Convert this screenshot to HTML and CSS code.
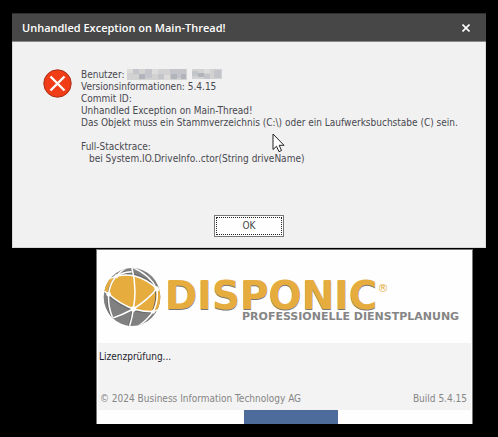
FILE: index.html
```html
<!DOCTYPE html>
<html lang="de">
<head>
<meta charset="utf-8">
<title>Unhandled Exception on Main-Thread!</title>
<link rel="stylesheet" href="styles.css">
</head>
<body>
<main class="desktop">
  <section class="dialog" role="dialog" aria-labelledby="dialog-title">
    <header class="titlebar">
      <h1 class="title" id="dialog-title">Unhandled Exception on Main-Thread!</h1>
      <button class="close" type="button" aria-label="Schließen">
        <svg width="8" height="8" viewBox="0 0 8 8"><path d="M.5 .5L7.5 7.5M7.5 .5L.5 7.5" stroke="#fff" stroke-width="1.6"/></svg>
      </button>
    </header>
    <div class="content">
      <svg class="error-icon" width="30" height="30" viewBox="0 0 30 30">
        <circle cx="14.5" cy="14.5" r="13.7" fill="#f03c17" stroke="#a8301c" stroke-width="1"/>
        <path d="M7.5 7.5L21.5 21.5M21.5 7.5L7.5 21.5" stroke="#fff" stroke-width="2.4"/>
      </svg>
      <div class="message">
        <p class="user">Benutzer:
          <svg class="redacted" width="95" height="12" viewBox="0 0 95 12" shape-rendering="crispEdges">
            <path fill="#d3d2d3" d="M0 0h60v11H0zM65 0h30v10H65z"/>
            <path fill="#c4c5ca" d="M6 0h6v5H6zM18 0h7v9h-7zM31 5h6v5h-6zM43 0h16v9H43zM65 2h6v5h-6zM77 5h6v5h-6zM87 1h7v8h-7z"/>
            <path fill="#b2b4bb" d="M12 5h6v5h-6zM44 5h6v5h-6zM54 5h5v5h-5zM71 4h6v4h-6z"/>
            <path fill="#dedcda" d="M0 0h6v4H0zM25 0h6v5h-6zM37 6h6v5h-6zM77 0h6v4h-6z"/>
          </svg>
        </p>
        <p>Versionsinformationen: 5.4.15</p>
        <p>Commit ID:</p>
        <p>Unhandled Exception on Main-Thread!</p>
        <p>Das Objekt muss ein Stammverzeichnis (C:\) oder ein Laufwerksbuchstabe (C) sein.</p>
        <p class="trace">Full-Stacktrace:</p>
        <p class="frame">bei System.IO.DriveInfo..ctor(String driveName)</p>
      </div>
    </div>
    <footer class="actions"><button class="ok" type="button">OK</button></footer>
    <svg class="pointer" width="13" height="20" viewBox="0 0 13 20"><path d="M1 1V16.5L4.5 13.3L7 18.7L9.5 17.5L7.2 12.3H12Z" fill="#fff" stroke="#222" stroke-width="1"/></svg>
  </section>

  <section class="splash">
    <div class="brand">
      <svg class="globe" width="58" height="60" viewBox="40 66 174 180">
        <defs><clipPath id="ball"><ellipse cx="127" cy="156" rx="85" ry="87"/></clipPath></defs>
        <g clip-path="url(#ball)">
          <path fill="#808080" d="M40 66h174v180H40z"/>
          <path fill="#e6ad3e" d="M40 138L48 108Q64 97 80 94Q108 86 135 93Q172 103 201 131L216 136V192L190 200Q160 200 131 192Q88 175 57 147L40 138Z"/>
          <g fill="none" stroke="#666" stroke-width="3" transform="translate(-4 3)">
            <path d="M201 131Q177 162 131 192Q96 211 66 221M80 94Q60 118 57 147Q54 180 68 214M131 192Q128 220 118 246M201 131Q206 166 190 200"/>
          </g>
          <path fill="none" stroke="#666" stroke-width="3" d="M80 90Q108 82 135 88Q174 98 204 127M57 153Q90 182 131 197Q160 204 190 204"/>
          <g fill="none" stroke="#fff" stroke-width="4.5">
            <path d="M46 110Q64 97 80 94Q108 86 135 93Q172 103 201 131L216 140"/>
            <path d="M126 66Q143 126 131 192Q128 220 118 248"/>
            <path d="M114 66Q62 96 57 147Q54 180 68 216"/>
            <path d="M40 136L57 147Q88 175 131 192Q160 200 190 200L216 190"/>
            <path d="M201 131Q177 162 131 192Q96 211 62 222"/>
            <path d="M126 66Q180 88 201 131Q208 166 190 200Q172 226 148 242"/>
            <path d="M80 94Q96 82 126 80"/>
          </g>
          <g fill="#fff"><circle cx="57" cy="148" r="7"/><circle cx="131" cy="192" r="8"/><circle cx="201" cy="131" r="7"/><circle cx="190" cy="200" r="6"/><circle cx="80" cy="94" r="6"/></g>
        </g>
      </svg>
      <div class="wordmark">
        <p class="name">DISPONIC<sup class="mark">®</sup></p>
        <p class="tagline">PROFESSIONELLE DIENSTPLANUNG</p>
      </div>
    </div>
    <div class="status">
      <p class="step">Lizenzprüfung...</p>
      <div class="legal"><span>© 2024 Business Information Technology AG</span><span>Build 5.4.15</span></div>
    </div>
    <div class="progress" role="progressbar" aria-label="Lizenzprüfung"><div class="chunk"></div></div>
  </section>
</main>
</body>
</html>
```
FILE: styles.css
```css
* { box-sizing: border-box; }
body {
  margin: 0;
  background: #000;
  color: #484850;
  font-family: "DejaVu Sans Condensed", "Noto Sans", sans-serif;
  font-size: 10px;
  line-height: 12px;
}
p, h1 { margin: 0; }
svg { display: block; flex: none; }
button { font: inherit; padding: 0; }

.desktop { padding: 13px 12px; }

.dialog {
  position: relative;
  background: #f1f1f1;
  border: 1px solid #d8d8d8;
  border-top: 0;
}
.titlebar {
  display: flex;
  align-items: center;
  justify-content: space-between;
  height: 29px;
  margin: 0 -1px;
  padding: 0 12px 0 10px;
  background: #474747;
  border-top: 1px solid #303030;
  border-bottom: 1px solid #888;
}
.title {
  color: #fff;
  font-family: "Open Sans", sans-serif;
  font-size: 11px;
  font-weight: 600;
  line-height: 16px;
}
.close {
  display: grid;
  place-items: center;
  width: 16px;
  height: 16px;
  border: 0;
  background: none;
}
.content { display: flex; gap: 8px; padding: 27px 30px 0; }
.message { flex: 1; white-space: nowrap; }
.user { display: flex; gap: 3px; }
.trace { margin-top: 12px; }
.frame { padding-left: 8px; }
.actions { display: flex; justify-content: center; padding: 50px 0 10px; }
.ok {
  width: 70px;
  height: 22px;
  border: 1px solid #777;
  background: #fefefe;
  color: #444;
  outline: 1px dotted #222;
  outline-offset: -3px;
}
.pointer { position: absolute; left: 259px; top: 120px; }

.splash {
  margin: 1px 13px 0 84px;
  background: #fefefe;
  border: 1px solid #777;
  border-bottom: 0;
}
.brand { display: flex; gap: 4px; padding: 17px 0 16px 6px; }
.wordmark { padding-top: 14px; white-space: nowrap; }
.name {
  display: flex;
  color: #e6ad3e;
  font-family: "DejaVu Sans", sans-serif;
  font-size: 39px;
  font-weight: bold;
  line-height: 30px;
  text-shadow: 0 1px 0 #777;
}
.mark { font-size: 11px; font-weight: normal; line-height: 16px; text-shadow: none; }
.tagline {
  padding-left: 77px;
  color: #858585;
  font-family: "DejaVu Sans", sans-serif;
  font-size: 11px;
  font-weight: bold;
}
.status { margin: 0 1px; padding: 8px 4px 5px 1px; background: #f3f3f3; }
.step { color: #25252d; }
.legal { display: flex; justify-content: space-between; margin-top: 30px; padding-left: 1px; color: #858585; }
.progress { display: flex; justify-content: center; height: 14px; padding-left: 13px; }
.chunk { width: 26%; background: #4d6c9b; }
```
